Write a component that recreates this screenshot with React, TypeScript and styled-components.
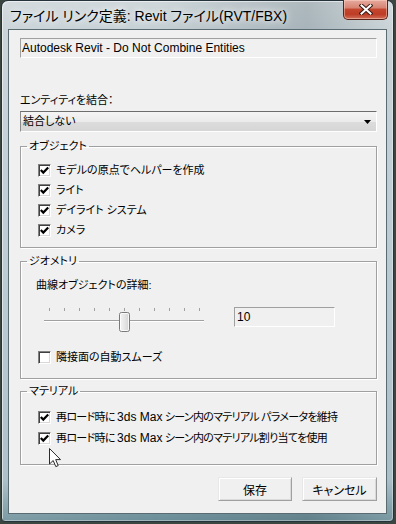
import React from 'react';
import styled, { createGlobalStyle } from 'styled-components';

const GlobalStyle = createGlobalStyle`
  html, body { margin: 0; padding: 0; }
  body {
    width: 396px;
    height: 524px;
    overflow: hidden;
    background: #3b4640;
    font-family: "Liberation Sans", "Noto Sans CJK JP", sans-serif;
    font-size: 11px;
    color: #000;
    font-feature-settings: "palt";
  }
  #root { width: 396px; height: 524px; }
`;

const Window = styled.div`
  box-sizing: border-box;
  margin-left: 1px;
  width: 393px;
  height: 522px;
  border: 1px solid #26333a;
  border-radius: 7px 7px 4px 4px;
  padding: 0 6px 7px 6px;
  display: flex;
  flex-direction: column;
  background:
    linear-gradient(90deg, rgba(255,255,255,0.12), rgba(0,0,0,0) 40%, rgba(60,80,90,0.22) 78%, rgba(255,255,255,0.1)),
    linear-gradient(180deg, #cfd7da 0%, #c4cfd4 6%, #b4c6d0 50%, #a3b9c4 92%, #7c9ca6 97%, #6a8d97 100%);
  box-shadow: inset 1px 1px 0 rgba(255,255,255,0.55), inset -1px -1px 0 rgba(255,255,255,0.35);
`;

const TitleBar = styled.div`
  display: flex;
  align-items: flex-start;
  height: 28px;
  flex-shrink: 0;
`;

const TitleText = styled.div`
  margin-top: 7px;
  margin-left: 2px;
  font-size: 14px;
  line-height: 16px;
  white-space: nowrap;
  color: #000;
  text-shadow: 0 0 6px rgba(255,255,255,0.9), 0 0 10px rgba(255,255,255,0.7);
`;

const CloseButton = styled.div`
  margin-left: auto;
  margin-top: -1px;
  margin-right: -1px;
  width: 45px;
  height: 20px;
  box-sizing: border-box;
  border: 1px solid #5a231a;
  border-top: none;
  border-radius: 0 0 5px 5px;
  background: linear-gradient(180deg, #e6ab9e 0%, #d78574 40%, #c4462f 50%, #bd3c25 75%, #d2705a 100%);
  box-shadow: inset 0 0 0 1px rgba(255,220,210,0.45);
  display: flex;
  align-items: center;
  justify-content: center;
`;

const Client = styled.div`
  position: relative;
  flex: 1;
  border: 1px solid #5b6b72;
  background: #f0f0f0;
  padding: 8px 9px 0 11px;
  display: flex;
  flex-direction: column;
`;

const ReadOnlyField = styled.div<{ $width?: number }>`
  box-sizing: border-box;
  height: 20px;
  ${p => (p.$width ? `width: ${p.$width}px;` : '')}
  border: 1px solid;
  border-color: #a0a0a0 #ffffff #ffffff #a0a0a0;
  background: #f0f0f0;
  padding-left: 1px;
  font-size: 12px;
  line-height: 18px;
  white-space: nowrap;
  flex-shrink: 0;
`;

const FieldLabel = styled.div`
  margin-top: 34px;
  line-height: 16px;
  height: 16px;
`;

const Combo = styled.div`
  box-sizing: border-box;
  margin-top: 3px;
  height: 21px;
  border: 1px solid;
  border-color: #6d6d6d #ffffff #ffffff #8a8a8a;
  background: linear-gradient(180deg, #f4f4f4 0%, #ebebeb 50%, #dcdcdc 51%, #d6d6d6 100%);
  display: flex;
  align-items: center;
  padding: 0 5px 0 2px;
`;

const ComboText = styled.span`
  flex: 1;
  line-height: 19px;
`;

const Group = styled.fieldset<{ $mt: number; $pt: number; $pb: number }>`
  margin: ${p => p.$mt}px 0 0 0;
  padding: ${p => p.$pt}px 0 ${p => p.$pb}px 0;
  border: 1px solid #a0a0a0;
  box-shadow: inset 1px 1px 0 #ffffff, 1px 1px 0 #ffffff;
  min-width: 0;
  display: flex;
  flex-direction: column;
`;

const Legend = styled.legend`
  margin-left: 6px;
  padding: 0 2px;
  line-height: 16px;
`;

const CheckRow = styled.div<{ $mt?: number; $tracking?: number }>`
  display: flex;
  align-items: center;
  height: 20px;
  padding-left: 17px;
  margin-top: ${p => p.$mt ?? 0}px;
  letter-spacing: ${p => p.$tracking ?? 0}px;
  white-space: nowrap;
`;

const CheckBox = styled.span`
  box-sizing: border-box;
  width: 13px;
  height: 13px;
  border: 1px solid;
  border-color: #808080 #ffffff #ffffff #808080;
  box-shadow: inset 1px 1px 0 #404040, inset -1px -1px 0 #d8d8d8;
  background: #ffffff;
  display: flex;
  align-items: center;
  justify-content: center;
  margin-right: 5px;
  flex-shrink: 0;
`;

const CheckLabel = styled.span`
  line-height: 16px;
`;

const Latin = styled.span`
  font-size: 12px;
  letter-spacing: 0;
`;

const SubLabel = styled.div`
  margin-top: 8px;
  padding-left: 15px;
  line-height: 16px;
`;

const SliderRow = styled.div`
  display: flex;
  align-items: flex-start;
  margin-top: 10px;
  height: 32px;
`;

const SliderArt = styled.svg`
  margin-left: 19px;
  display: block;
  flex-shrink: 0;
`;

const ValueField = styled(ReadOnlyField)`
  margin-top: 4px;
  margin-left: 24px;
  padding-left: 2px;
`;

const ButtonRow = styled.div`
  display: flex;
  justify-content: flex-end;
  gap: 10px;
  margin-top: 12px;
`;

const Button = styled.div<{ $w: number }>`
  box-sizing: border-box;
  width: ${p => p.$w}px;
  height: 24px;
  border: 1px solid;
  border-color: #e8e8e8 #a0a0a0 #a0a0a0 #e8e8e8;
  box-shadow: inset 1px 1px 0 #ffffff, inset -1px -1px 0 #dadada;
  background: #f0f0f0;
  display: flex;
  align-items: center;
  justify-content: center;
  font-size: 12px;
`;

const Cursor = styled.svg`
  position: absolute;
  left: 40px;
  top: 418px;
`;

const Check = () => (
  <svg width="9" height="9" viewBox="0 0 9 9">
    <path d="M0.8 4 L3.3 6.6 L8.2 1.5" fill="none" stroke="#000" strokeWidth="2.2" />
  </svg>
);

const Checkbox: React.FC<{ checked?: boolean; label: React.ReactNode; mt?: number; tracking?: number }> = ({
  checked,
  label,
  mt,
  tracking,
}) => (
  <CheckRow $mt={mt} $tracking={tracking}>
    <CheckBox>{checked && <Check />}</CheckBox>
    <CheckLabel>{label}</CheckLabel>
  </CheckRow>
);

const Slider = () => {
  const ticks = Array.from({ length: 11 }, (_, i) => 9 + i * 15);
  return (
    <SliderArt width="170" height="32" viewBox="0 0 170 32">
      {ticks.map(x => (
        <rect key={x} x={x} y={5} width={1} height={3} fill="#a0a0a0" />
      ))}
      <rect x="4" y="17" width="160" height="1" fill="#a0a0a0" />
      <rect x="4" y="18" width="160" height="1" fill="#ffffff" />
      <defs>
        <linearGradient id="thumb" x1="0" y1="0" x2="1" y2="0">
          <stop offset="0" stopColor="#f6f6f6" />
          <stop offset="0.5" stopColor="#e6e6e6" />
          <stop offset="1" stopColor="#d2d2d2" />
        </linearGradient>
      </defs>
      <rect x="79.5" y="9.5" width="10" height="19" rx="2" fill="url(#thumb)" stroke="#7a7a7a" />
      <rect x="80.5" y="10.5" width="8" height="17" rx="1" fill="none" stroke="#ffffff" strokeOpacity="0.8" />
    </SliderArt>
  );
};

export default function App() {
  return (
    <>
      <GlobalStyle />
      <Window>
        <TitleBar>
          <TitleText>ファイル リンク定義: Revit ファイル(RVT/FBX)</TitleText>
          <CloseButton>
            <svg width="14" height="11" viewBox="0 0 14 11">
              <path d="M2.5 1.5 L11.5 9.5 M11.5 1.5 L2.5 9.5" stroke="#3a1a14" strokeWidth="4" strokeLinecap="square" />
              <path d="M2.5 1.5 L11.5 9.5 M11.5 1.5 L2.5 9.5" stroke="#ffffff" strokeWidth="2" strokeLinecap="square" />
            </svg>
          </CloseButton>
        </TitleBar>
        <Client>
          <ReadOnlyField>Autodesk Revit - Do Not Combine Entities</ReadOnlyField>
          <FieldLabel>エンティティを結合：</FieldLabel>
          <Combo>
            <ComboText>結合しない</ComboText>
            <svg width="7" height="4" viewBox="0 0 7 4">
              <path d="M0 0 H7 L3.5 4 Z" fill="#000" />
            </svg>
          </Combo>

          <Group $mt={6} $pt={6} $pb={7}>
            <Legend>オブジェクト</Legend>
            <Checkbox checked label="モデルの原点でヘルパーを作成" />
            <Checkbox checked label="ライト" />
            <Checkbox checked label="デイライト システム" />
            <Checkbox checked label="カメラ" />
          </Group>

          <Group $mt={5} $pt={0} $pb={11}>
            <Legend>ジオメトリ</Legend>
            <SubLabel>曲線オブジェクトの詳細:</SubLabel>
            <SliderRow>
              <Slider />
              <ValueField $width={101}>10</ValueField>
            </SliderRow>
            <Checkbox label="隣接面の自動スムーズ" mt={12} />
          </Group>

          <Group $mt={4} $pt={8} $pb={16}>
            <Legend>マテリアル</Legend>
            <Checkbox
              checked
              tracking={-0.7}
              label={<>再ロード時に <Latin>3ds Max</Latin> シーン内のマテリアル パラメータを維持</>}
            />
            <Checkbox
              checked
              tracking={-0.7}
              mt={1}
              label={<>再ロード時に <Latin>3ds Max</Latin> シーン内のマテリアル割り当てを使用</>}
            />
          </Group>

          <ButtonRow>
            <Button $w={74}>保存</Button>
            <Button $w={75}>キャンセル</Button>
          </ButtonRow>

          <Cursor width="13" height="20" viewBox="0 0 13 20">
            <path d="M0.5 0.5 L0.5 16 L4.2 12.5 L6.8 18.6 L9.2 17.6 L6.7 11.6 L11.5 11.6 Z" fill="#ffffff" stroke="#2a2a2a" strokeWidth="1" strokeLinejoin="round" />
          </Cursor>
        </Client>
      </Window>
    </>
  );
}
